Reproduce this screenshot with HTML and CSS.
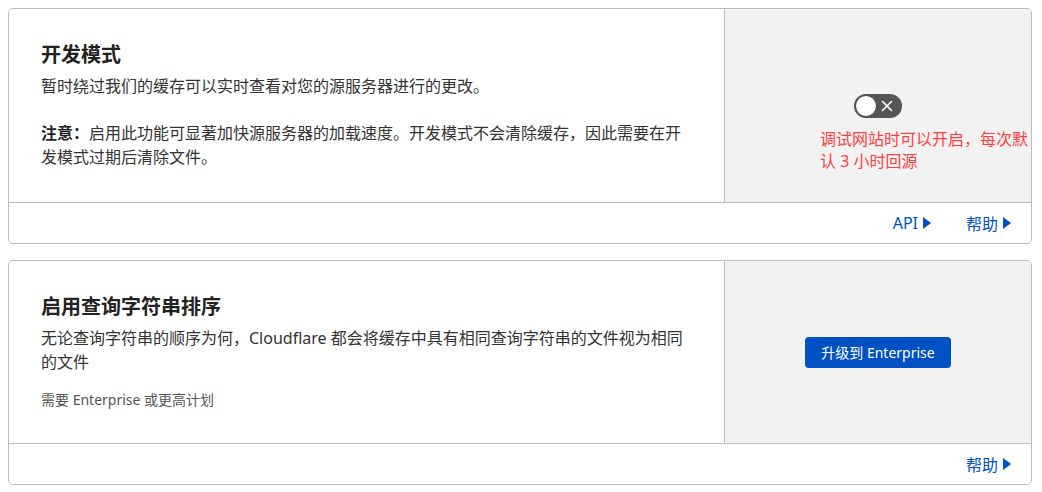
FILE: index.html
```html
<!DOCTYPE html>
<html lang="zh-CN">
<head>
<meta charset="utf-8">
<title>缓存设置</title>
<link rel="stylesheet" href="styles.css">
</head>
<body>
<div class="page">
  <section class="card">
    <div class="card-body">
      <div class="card-main">
        <h2 class="card-title">开发模式</h2>
        <p class="card-desc">暂时绕过我们的缓存可以实时查看对您的源服务器进行的更改。</p>
        <p class="card-desc note"><strong>注意：</strong>启用此功能可显著加快源服务器的加载速度。开发模式不会清除缓存，因此需要在开发模式过期后清除文件。</p>
      </div>
      <div class="card-side">
        <div class="toggle-wrap">
          <button class="toggle" type="button" aria-label="开发模式">
            <span class="knob"></span>
            <svg class="toggle-x" width="12" height="12" viewBox="0 0 12 12"><path d="M1.5 1.5L10.5 10.5M10.5 1.5L1.5 10.5" stroke="#fff" stroke-width="1.6" stroke-linecap="round"/></svg>
          </button>
          <div class="annotation">调试网站时可以开启，每次默认 3 小时回源</div>
        </div>
      </div>
    </div>
    <div class="card-footer">
      <a class="link" href="#">API<span class="caret"></span></a>
      <a class="link" href="#">帮助<span class="caret"></span></a>
    </div>
  </section>

  <section class="card">
    <div class="card-body">
      <div class="card-main">
        <h2 class="card-title">启用查询字符串排序</h2>
        <p class="card-desc">无论查询字符串的顺序为何，Cloudflare 都会将缓存中具有相同查询字符串的文件视为相同的文件</p>
        <p class="card-hint">需要 Enterprise 或更高计划</p>
      </div>
      <div class="card-side">
        <button class="btn-primary" type="button">升级到 Enterprise</button>
      </div>
    </div>
    <div class="card-footer">
      <a class="link" href="#">帮助<span class="caret"></span></a>
    </div>
  </section>
</div>
</body>
</html>
```

FILE: styles.css
```css
* { box-sizing: border-box; }

html, body { background: #fff; }

body {
  margin: 8px 10px 8px 8px;
  font-family: "Noto Sans", "Noto Sans CJK SC", sans-serif;
  color: #333;
}

.page {
  display: flex;
  flex-direction: column;
  gap: 16px;
}

.card {
  border: 1px solid #bcbcbc;
  border-radius: 5px;
  overflow: hidden;
  background: #fff;
}

.card-body {
  display: flex;
  border-bottom: 1px solid #bcbcbc;
}

.card-main {
  flex: 1;
  padding: 32px 32px 33px 32px;
}

.card-title {
  margin: 0 0 5px;
  font-size: 20px;
  line-height: 28px;
  font-weight: 700;
  color: #222;
}

.card-desc {
  margin: 0;
  font-size: 16px;
  line-height: 24px;
  color: #333;
}

.card-desc.note { margin-top: 23px; }

.card-desc strong { font-weight: 700; color: #222; }

.card-hint {
  margin: 16px 0 0;
  font-size: 14px;
  line-height: 20px;
  color: #555;
}

.card-side {
  width: 307px;
  flex: none;
  border-left: 1px solid #bcbcbc;
  background: #f2f2f2;
  display: flex;
  align-items: center;
  justify-content: center;
}

.toggle-wrap {
  position: relative;
  display: flex;
}

.toggle {
  position: relative;
  width: 48px;
  height: 24px;
  padding: 0;
  border: none;
  border-radius: 12px;
  background: #555;
  cursor: pointer;
}

.knob {
  position: absolute;
  left: 1px;
  top: 1px;
  width: 22px;
  height: 22px;
  border-radius: 50%;
  background: #fff;
  border: 1px solid #444;
}

.toggle-x {
  position: absolute;
  right: 9px;
  top: 6px;
}

.annotation {
  position: absolute;
  top: 34px;
  left: -34px;
  width: 212px;
  font-size: 16px;
  line-height: 22px;
  color: #ff3d3d;
}

.btn-primary {
  height: 31px;
  padding: 0 16px;
  border: none;
  border-radius: 4px;
  background: #0051c3;
  color: #fff;
  font-family: "Noto Sans", "Noto Sans CJK SC", sans-serif;
  font-size: 14px;
  line-height: 31px;
  cursor: pointer;
}

.card-footer {
  height: 40px;
  display: flex;
  align-items: center;
  justify-content: flex-end;
  gap: 35px;
  padding-right: 20px;
}

.link {
  display: inline-flex;
  align-items: center;
  gap: 5px;
  font-size: 16px;
  color: #0051c3;
  text-decoration: none;
}

.caret {
  width: 0;
  height: 0;
  border-top: 6px solid transparent;
  border-bottom: 6px solid transparent;
  border-left: 8px solid #0051c3;
}
```
